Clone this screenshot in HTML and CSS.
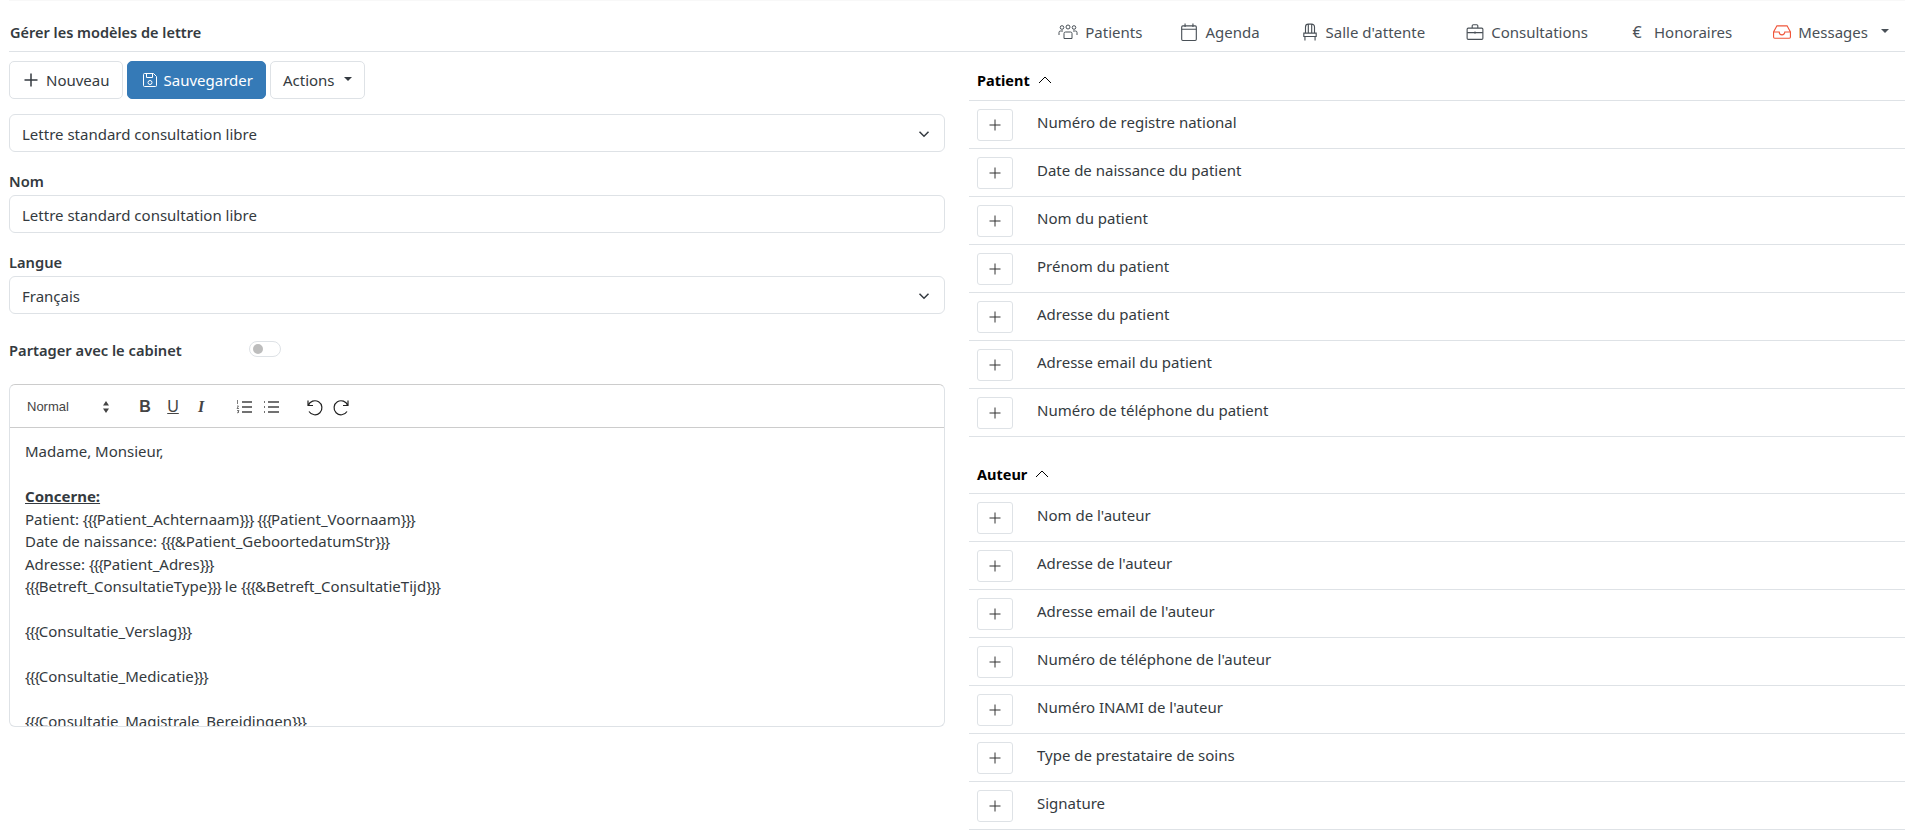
FILE: index.html
```html
<!DOCTYPE html>
<html lang="fr">
<head>
<meta charset="utf-8">
<title>Gérer les modèles de lettre</title>
<link rel="stylesheet" href="styles.css">
</head>
<body>
<header class="topbar">
  <div class="page-title">Gérer les modèles de lettre</div>
  <nav class="nav">
    <a class="nav-item"><svg class="nav-icon nav-icon-wide" viewBox="0 0 20 16"><circle cx="4" cy="3.500" r="1.800"/><circle cx="10" cy="3" r="2"/><circle cx="16" cy="3.500" r="1.800"/><path d="M1 11V8.500A1.500 1.500 0 0 1 2.500 7H5M19 11V8.500A1.500 1.500 0 0 0 17.500 7H15M6 14.500V9.500A1.500 1.500 0 0 1 7.500 8h5A1.500 1.500 0 0 1 14 9.500v5z"/></svg>Patients</a>
    <a class="nav-item"><svg class="nav-icon" viewBox="0 0 16 16"><rect x="1.500" y="2.500" width="13" height="13" rx="1"/><path d="M1.500 5.500h13M4.500 .5v3M11.500 .5v3"/></svg>Agenda</a>
    <a class="nav-item"><svg class="nav-icon" viewBox="0 0 16 16"><path d="M4 9V3.500A2.500 2.500 0 0 1 6.500 1h3A2.500 2.500 0 0 1 12 3.500V9M6.500 1.500V9M9.500 1.500V9M2.500 9h11v3h-11zM3.500 12v3.500M12.500 12v3.500"/></svg>Salle d'attente</a>
    <a class="nav-item"><svg class="nav-icon" viewBox="0 0 16 16"><rect x="1" y="4.500" width="14" height="10" rx="1"/><path d="M5.500 4.500V2.500a1 1 0 0 1 1-1h3a1 1 0 0 1 1 1v2M1 8.500h14M8 7.500v2"/></svg>Consultations</a>
    <a class="nav-item nav-euro"><span class="euro">€</span>Honoraires</a>
    <a class="nav-item nav-last"><svg class="nav-icon nav-icon-red" viewBox="0 0 16 16"><path d="M3.500 2.500h9l3 5.500v4.500a1 1 0 0 1-1 1h-13a1 1 0 0 1-1-1V8zM.5 8h5a2.500 2.500 0 0 0 5 0h5"/></svg>Messages<span class="caret caret-nav"></span></a>
  </nav>
</header>
<main class="columns">
  <section class="left">
    <div class="actions">
      <button class="btn btn-new"><svg class="btn-icon btn-plus" viewBox="0 0 16 16"><path d="M8 1.500v13M1.500 8h13"/></svg>Nouveau</button>
      <button class="btn btn-primary"><svg class="btn-icon" viewBox="0 0 16 16"><path d="M2.500 1.500h9l3 3v9a1 1 0 0 1-1 1h-11a1 1 0 0 1-1-1v-11a1 1 0 0 1 1-1zM4.500 1.500v4h6v-4"/><circle cx="8" cy="10.500" r="2"/></svg>Sauvegarder</button>
      <button class="btn btn-actions">Actions<span class="caret caret-btn"></span></button>
    </div>
    <div class="control select">Lettre standard consultation libre<svg class="chev" viewBox="0 0 16 16"><path d="M2 5l6 6 6-6"/></svg></div>
    <label class="label">Nom</label>
    <div class="control">Lettre standard consultation libre</div>
    <label class="label">Langue</label>
    <div class="control select">Français<svg class="chev" viewBox="0 0 16 16"><path d="M2 5l6 6 6-6"/></svg></div>
    <div class="share">
      <span class="share-label">Partager avec le cabinet</span>
      <span class="toggle"><span class="knob"></span></span>
    </div>
    <div class="editor">
      <div class="toolbar">
        <span class="format">Normal<svg class="updown" viewBox="0 0 8 14"><path d="M4 1l3 4.500H1zM4 13l3-4.500H1z"/></svg></span>
        <span class="tool-group">
          <span class="tool tool-b">B</span>
          <span class="tool tool-u">U</span>
          <span class="tool tool-i">I</span>
        </span>
        <span class="tool-group">
          <svg class="tool-svg" viewBox="0 0 18 18"><path d="M7 4h10M7 9h10M7 14h10"/><path class="tiny" d="M2.500 2v4M2 8h1.500l-1.500 2.500h2M2 12.500h2l-1 1.500h1l-2 1"/></svg>
          <svg class="tool-svg" viewBox="0 0 18 18"><path d="M6 4h11M6 9h11M6 14h11M2 4h1M2 9h1M2 14h1"/></svg>
        </span>
        <span class="tool-group">
          <svg class="tool-svg tool-hist" viewBox="0 0 18 18"><path d="M3 2.500v5h5M3.300 7.500A7 7 0 1 1 4 13.500"/></svg>
          <svg class="tool-svg tool-hist" viewBox="0 0 18 18"><path d="M15 2.500v5h-5M14.700 7.500A7 7 0 1 0 14 13.500"/></svg>
        </span>
      </div>
      <div class="editor-body">
        <p>Madame, Monsieur,</p>
        <p><br></p>
        <p><strong><u>Concerne:</u></strong></p>
        <p>Patient: <span class="br">{{{</span>Patient_Achternaam<span class="br">}}}</span> <span class="br">{{{</span>Patient_Voornaam<span class="br">}}}</span></p>
        <p>Date de naissance: <span class="br">{{{</span>&amp;Patient_GeboortedatumStr<span class="br">}}}</span></p>
        <p>Adresse: <span class="br">{{{</span>Patient_Adres<span class="br">}}}</span></p>
        <p><span class="br">{{{</span>Betreft_ConsultatieType<span class="br">}}}</span> le <span class="br">{{{</span>&amp;Betreft_ConsultatieTijd<span class="br">}}}</span></p>
        <p><br></p>
        <p><span class="br">{{{</span>Consultatie_Verslag<span class="br">}}}</span></p>
        <p><br></p>
        <p><span class="br">{{{</span>Consultatie_Medicatie<span class="br">}}}</span></p>
        <p><br></p>
        <p><span class="br">{{{</span>Consultatie_Magistrale_Bereidingen<span class="br">}}}</span></p>
      </div>
    </div>
  </section>
  <section class="right">
    <h2 class="group-title">Patient<svg class="up" viewBox="0 0 16 16"><path d="M2 11l6-6 6 6"/></svg></h2>
    <div class="row"><button class="add"><svg viewBox="0 0 16 16"><path d="M8 2.500v11M2.500 8h11"/></svg></button><span>Numéro de registre national</span></div>
    <div class="row"><button class="add"><svg viewBox="0 0 16 16"><path d="M8 2.500v11M2.500 8h11"/></svg></button><span>Date de naissance du patient</span></div>
    <div class="row"><button class="add"><svg viewBox="0 0 16 16"><path d="M8 2.500v11M2.500 8h11"/></svg></button><span>Nom du patient</span></div>
    <div class="row"><button class="add"><svg viewBox="0 0 16 16"><path d="M8 2.500v11M2.500 8h11"/></svg></button><span>Prénom du patient</span></div>
    <div class="row"><button class="add"><svg viewBox="0 0 16 16"><path d="M8 2.500v11M2.500 8h11"/></svg></button><span>Adresse du patient</span></div>
    <div class="row"><button class="add"><svg viewBox="0 0 16 16"><path d="M8 2.500v11M2.500 8h11"/></svg></button><span>Adresse email du patient</span></div>
    <div class="row"><button class="add"><svg viewBox="0 0 16 16"><path d="M8 2.500v11M2.500 8h11"/></svg></button><span>Numéro de téléphone du patient</span></div>
    <h2 class="group-title group-second">Auteur<svg class="up" viewBox="0 0 16 16"><path d="M2 11l6-6 6 6"/></svg></h2>
    <div class="row"><button class="add"><svg viewBox="0 0 16 16"><path d="M8 2.500v11M2.500 8h11"/></svg></button><span>Nom de l'auteur</span></div>
    <div class="row"><button class="add"><svg viewBox="0 0 16 16"><path d="M8 2.500v11M2.500 8h11"/></svg></button><span>Adresse de l'auteur</span></div>
    <div class="row"><button class="add"><svg viewBox="0 0 16 16"><path d="M8 2.500v11M2.500 8h11"/></svg></button><span>Adresse email de l'auteur</span></div>
    <div class="row"><button class="add"><svg viewBox="0 0 16 16"><path d="M8 2.500v11M2.500 8h11"/></svg></button><span>Numéro de téléphone de l'auteur</span></div>
    <div class="row"><button class="add"><svg viewBox="0 0 16 16"><path d="M8 2.500v11M2.500 8h11"/></svg></button><span>Numéro INAMI de l'auteur</span></div>
    <div class="row"><button class="add"><svg viewBox="0 0 16 16"><path d="M8 2.500v11M2.500 8h11"/></svg></button><span>Type de prestataire de soins</span></div>
    <div class="row"><button class="add"><svg viewBox="0 0 16 16"><path d="M8 2.500v11M2.500 8h11"/></svg></button><span>Signature</span></div>
  </section>
</main>
</body>
</html>
```
FILE: styles.css
```css
* { box-sizing: border-box; }
html, body { height: 100%; }
body {
  margin: 0;
  height: 833px;
  overflow: hidden;
  background: #fff;
  color: #212529;
  font-family: "Noto Sans", "Open Sans", sans-serif;
  font-size: 15px;
  line-height: 22px;
}
svg { fill: none; stroke: currentColor; stroke-width: 1; }
.topbar {
  display: flex;
  align-items: center;
  justify-content: space-between;
  height: 52px;
  margin: 0 9px;
  padding-top: 12px;
  border-bottom: 1px solid #dee2e6;
  border-top: 1px solid #f8f8f8;
}
.page-title { font-size: 14.500px; font-weight: 600; color: #343a40; margin-left: 1px; }
.nav { display: flex; color: #495057; font-size: 15px; }
.nav-item { display: flex; align-items: center; margin-left: 41px; }
.nav-item:nth-child(2) { margin-left: 38px; }
.nav-icon { width: 18px; height: 18px; margin-right: 7px; color: #495057; }
.nav-icon-wide { width: 20px; margin-right: 7px; }
.nav-icon-red { color: #f0553a; margin-right: 7px; }
.nav-euro .euro { width: 16px; margin-right: 9px; font-size: 16px; text-align: center; }
.nav-last { margin-right: 16px; }
.caret { display: inline-block; border-top: 4.500px solid currentColor; border-left: 4.500px solid transparent; border-right: 4.500px solid transparent; }
.caret-nav { margin-left: 13px; margin-bottom: 3px; border-top-width: 4px; border-left-width: 4px; border-right-width: 4px; }
.columns { display: grid; grid-template-columns: 936px 936px; column-gap: 24px; padding-left: 9px; }
.left { display: flex; flex-direction: column; }
.actions { display: flex; gap: 4px; padding-top: 9px; margin-bottom: 15px; }
.btn {
  display: inline-flex; align-items: center; height: 38px; padding: 0 13px;
  background: #fff; border: 1px solid #dee2e6; border-radius: 5px;
  color: #343a40; font: inherit;
}
.btn-new { padding: 0 12px 0 13px; }
.btn-icon { width: 16px; height: 16px; margin-right: 6px; margin-left: 2px; }
.btn-plus { stroke-width: 1.500; margin: 0 7px 0 0; }
.btn-primary { background: #357ab7; border-color: #357ab7; color: #fff; padding: 0 12px 0 12px; }
.btn-actions { padding: 0 12px; }
.caret-btn { margin-left: 9px; margin-bottom: 2px; }
.control {
  display: flex; align-items: center; justify-content: space-between;
  height: 38px; padding: 1px 12px 0;
  border: 1px solid #dee2e6; border-radius: 6px; color: #343a40;
}
.chev { width: 12px; height: 12px; stroke-width: 2; margin-right: 2px; }
.label { display: block; font-size: 14.700px; font-weight: 600; color: #343a40; margin: 18px 0 3px; height: 22px; }
.share { display: flex; align-items: center; height: 24px; margin-top: 24px; margin-bottom: 22px; }
.share-label { width: 240px; font-size: 14.700px; font-weight: 600; color: #343a40; }
.toggle { display: block; width: 32px; height: 16px; border: 1px solid #dee2e6; border-radius: 8px; padding: 2px 3px; margin-bottom: 2px; }
.knob { display: block; width: 10px; height: 10px; border-radius: 50%; background: #bdbdbd; }
.editor { height: 343px; border: 1px solid #dee2e6; border-top-color: #ccc; border-radius: 6px; overflow: hidden; }
.toolbar { display: flex; align-items: center; height: 43px; padding: 2px 0 0 17px; border-bottom: 1px solid #ccc; color: #444; }
.format { display: flex; align-items: center; justify-content: space-between; width: 83px; font-size: 13px; font-family: "Liberation Sans", sans-serif; }
.updown { width: 8px; height: 14px; fill: #444; stroke: none; }
.tool-group { display: flex; align-items: center; gap: 14px; margin-left: 28px; }
.tool-group + .tool-group { margin-left: 27px; gap: 9px; }
.tool-group + .tool-group + .tool-group { margin-left: 25px; gap: 10px; }
.tool { width: 14px; font-size: 16px; text-align: center; font-family: "Liberation Sans", sans-serif; }
.tool-b { font-weight: 700; }
.tool-u { text-decoration: underline; }
.tool-i { font-style: italic; font-family: "Liberation Serif", serif; font-weight: 700; }
.tool-svg { width: 18px; height: 18px; stroke-width: 1.600; }
.tool-svg .tiny { stroke-width: .7; }
.tool-hist { color: #222; stroke-width: 1.200; }
.editor-body { height: 300px; overflow: hidden; padding: 12px 15px; color: #343a40; line-height: 22.500px; }
.editor-body p { margin: 0; }
.br { letter-spacing: -1.100px; }
.right { display: flex; flex-direction: column; }
.group-title {
  display: flex; align-items: center; height: 49px; margin: 0;
  padding: 8px 8px 0; border-bottom: 1px solid #dee2e6;
  font-size: 14.500px; font-weight: 700; color: #000;
}
.group-second { margin-top: 8px; height: 49px; padding-top: 9px; }
.up { width: 16px; height: 16px; margin-left: 7px; }
.row { display: flex; align-items: center; height: 48px; padding-left: 8px; border-bottom: 1px solid #dee2e6; color: #343a40; }
.row span { margin-left: 24px; margin-bottom: 5px; }
.add { display: flex; align-items: center; justify-content: center; width: 36px; height: 32px; padding: 0; background: #fff; border: 1px solid #dee2e6; border-radius: 3px; color: #333; }
.add svg { width: 16px; height: 16px; }
```
